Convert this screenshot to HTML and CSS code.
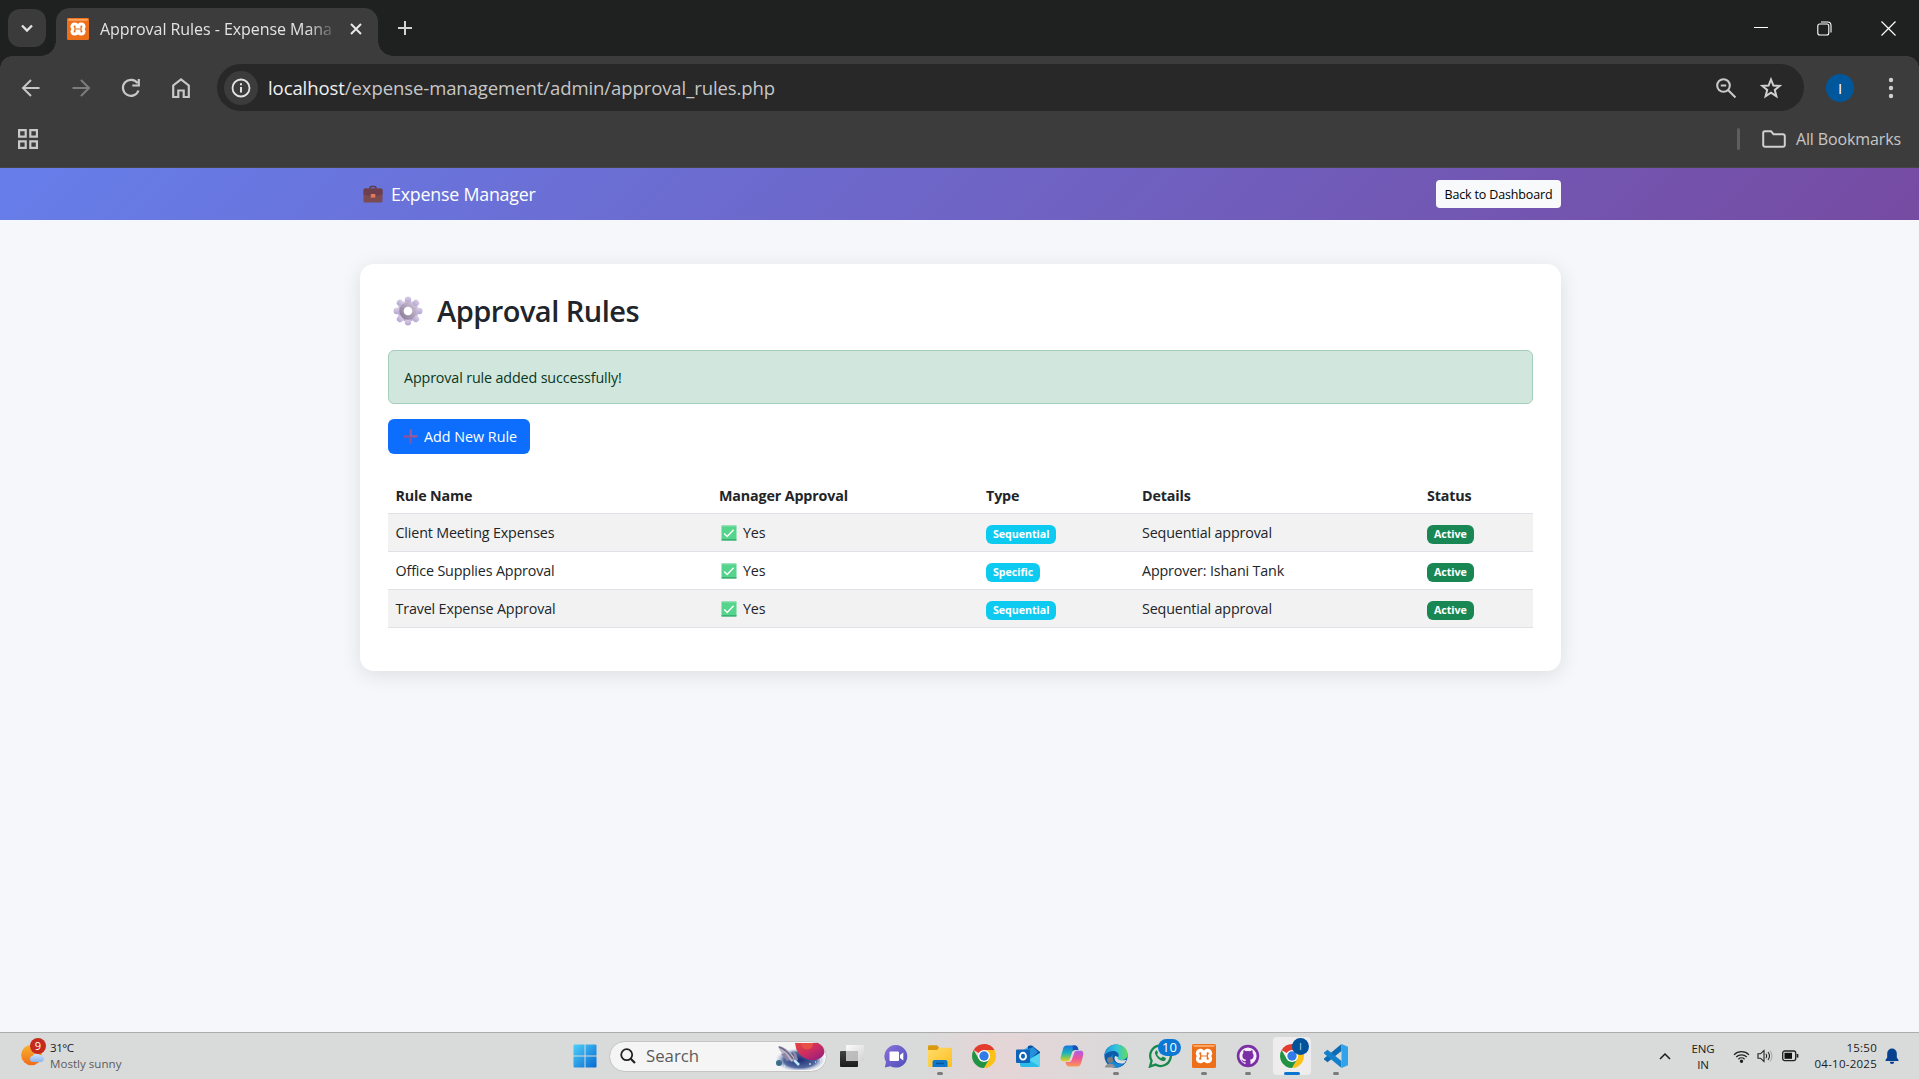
FILE: index.html
```html
<!DOCTYPE html>
<html lang="en">
<head>
<meta charset="utf-8">
<title>Approval Rules - Expense Manager</title>
<link rel="stylesheet" href="styles.css">
</head>
<body>
<svg class="defs" width="0" height="0" aria-hidden="true">
  <defs>
    <linearGradient id="gWin" x1="0" y1="0" x2="1" y2="1"><stop offset="0" stop-color="#4fd0fb"/><stop offset="1" stop-color="#0669cf"/></linearGradient>
    <linearGradient id="gGear" x1="0" y1="0" x2="0" y2="1"><stop offset="0" stop-color="#d9cfe6"/><stop offset="1" stop-color="#b5a5d2"/></linearGradient>
    <linearGradient id="gRing" x1="1" y1="0" x2="0" y2="1"><stop offset="0" stop-color="#c9bfd2"/><stop offset="1" stop-color="#8d7f9b"/></linearGradient>
    <linearGradient id="gSun" x1="0" y1="0" x2="0" y2="1"><stop offset="0" stop-color="#f5b52f"/><stop offset="1" stop-color="#f36b17"/></linearGradient>
    <linearGradient id="gCloud" x1="0" y1="0" x2="0" y2="1"><stop offset="0" stop-color="#d3e6fb"/><stop offset="1" stop-color="#8bb5f0"/></linearGradient>
    <linearGradient id="gTv" x1="0" y1="0" x2="1" y2="1"><stop offset="0" stop-color="#fff"/><stop offset="1" stop-color="#d2d2d2"/></linearGradient>
    <linearGradient id="gTvDark" x1="0" y1="0" x2="0" y2="1"><stop offset="0" stop-color="#444"/><stop offset="1" stop-color="#1b1b1b"/></linearGradient>
    <linearGradient id="gChat" x1="0" y1="0" x2="1" y2="1"><stop offset="0" stop-color="#8d75d6"/><stop offset=".35" stop-color="#7564cf"/><stop offset="1" stop-color="#4d50bb"/></linearGradient>
    <linearGradient id="gFolder" x1="0" y1="0" x2="1" y2="1"><stop offset="0" stop-color="#ffdc69"/><stop offset="1" stop-color="#fdbf22"/></linearGradient>
    <linearGradient id="gCopA" x1="0" y1="0" x2="0" y2="1"><stop offset="0" stop-color="#1276e0"/><stop offset=".5" stop-color="#25b5b9"/><stop offset=".75" stop-color="#7cc857"/><stop offset="1" stop-color="#f5cb22"/></linearGradient>
    <linearGradient id="gCopB" x1="0" y1="0" x2="0" y2="1"><stop offset="0" stop-color="#a95ee8"/><stop offset=".5" stop-color="#ee5697"/><stop offset="1" stop-color="#fb9a55"/></linearGradient>
    <linearGradient id="gEdge" x1="0" y1="0" x2="1" y2="0"><stop offset="0" stop-color="#2794dc"/><stop offset=".5" stop-color="#2fc3df"/><stop offset="1" stop-color="#63dc60"/></linearGradient>
    <linearGradient id="gPlanet" x1="0" y1="0" x2="1" y2="1"><stop offset="0" stop-color="#e4463f"/><stop offset=".5" stop-color="#cb2d63"/><stop offset="1" stop-color="#8d1a80"/></linearGradient>
    <radialGradient id="gSpace"><stop offset="0" stop-color="#1d2e75"/><stop offset=".65" stop-color="#52699f"/><stop offset="1" stop-color="#c3d4ea" stop-opacity="0"/></radialGradient>
    <symbol id="xampp" viewBox="0 0 24 24">
      <rect width="24" height="24" rx="1.5" fill="#ee6f1a"/><rect x="1.5" y="1" width="21" height="2" fill="#f9a665"/>
      <path d="M8 6.500h.5a2.500 2.500 0 0 1 2.500 2.500v.7h2V9a2.500 2.500 0 0 1 2.500-2.500h.5a2.600 2.600 0 0 1 2 4.200c-.6.800-.6 1.800 0 2.600a2.600 2.600 0 0 1-2 4.200h-.5a2.500 2.500 0 0 1-2.500-2.500v-.7h-2v.7a2.500 2.500 0 0 1-2.500 2.500H8a2.600 2.600 0 0 1-2-4.200c.6-.8.6-1.800 0-2.600A2.600 2.600 0 0 1 8 6.500z" fill="none" stroke="#fff" stroke-width="3.400"/>
    </symbol>
    <symbol id="chrome" viewBox="0 0 24 24">
      <path d="M12 12 1.61 6A12 12 0 0 1 22.39 6z" fill="#e33b2e"/>
      <path d="M12 0a12 12 0 0 1 10.39 6H12z" fill="#e33b2e"/>
      <path d="M22.39 6A12 12 0 0 1 12 24l5.2-9L17.2 9 12 6z" fill="#fbc116"/>
      <path d="M1.61 6A12 12 0 0 0 12 24l5.2-9-5.2 3-5.2-3z" fill="#229342"/>
      <circle cx="12" cy="12" r="6" fill="#fff"/><circle cx="12" cy="12" r="4.7" fill="#2f7ce8"/>
    </symbol>
    <symbol id="check" viewBox="0 0 16 16">
      <rect x=".5" y=".5" width="15" height="15" rx="1" fill="#55d48b"/><path d="M.5 14.2h15v1.3H.5z" fill="#38a670"/><path d="M.5 1.5v-1h15v1z" fill="#8cdcae"/>
      <path d="M3.2 8.4l3 3.1L12.6 4.8" fill="none" stroke="#fff" stroke-width="1.4"/>
    </symbol>
  </defs>
</svg>

<div class="screen">
  <header class="browser">
    <div class="tabstrip">
      <div class="tab-menu"><svg width="14" height="14" viewBox="0 0 14 14"><path d="M2 4.5l5 5 5-5" fill="none" stroke="#e3e3e3" stroke-width="2.3"/></svg></div>
      <div class="tab">
        <svg class="favicon" width="22" height="22"><use href="#xampp"/></svg>
        <span class="tab-title">Approval Rules - Expense Mana</span>
        <svg class="tab-close" width="12" height="12" viewBox="0 0 12 12"><path d="M1 1l10 10M11 1L1 11" stroke="#e8e8e8" stroke-width="2"/></svg>
      </div>
      <svg class="newtab" width="16" height="16" viewBox="0 0 16 16"><path d="M8 1v14M1 8h14" stroke="#d4d4d4" stroke-width="2"/></svg>
      <div class="window-buttons">
        <svg width="14" height="14" viewBox="0 0 14 14"><path d="M0 6.5h14" stroke="#fff"/></svg>
        <svg width="15" height="15" viewBox="0 0 15 15" fill="none" stroke="#fff" stroke-width="1.1"><rect x=".8" y="3" width="11" height="11" rx="2"/><path d="M4 1h6.5a3.5 3.5 0 0 1 3.5 3.5V11.500"/></svg>
        <svg width="15" height="15" viewBox="0 0 15 15"><path d="M.5.5l14 14M14.500.5l-14 14" stroke="#fff" stroke-width="1.2"/></svg>
      </div>
    </div>
    <div class="toolbar">
      <nav class="nav-icons">
        <svg width="20" height="20" viewBox="0 0 20 20" fill="none" stroke="#c8c8c8" stroke-width="2"><path d="M18.500 10H3M10 2l-8 8 8 8"/></svg>
        <svg width="20" height="20" viewBox="0 0 20 20" fill="none" stroke="#7d7d7d" stroke-width="2"><path d="M1.500 10H17M10 2l8 8-8 8"/></svg>
        <svg width="20" height="20" viewBox="0 0 20 20" fill="none" stroke="#c8c8c8" stroke-width="2.200"><path d="M17.500 12.500A8 8 0 1 1 16.500 5.200M17.800 1v6.500h-6.500"/></svg>
        <svg width="20" height="22" viewBox="0 0 20 22" fill="none" stroke="#c8c8c8" stroke-width="2.200"><path d="M2.200 20V8.500L10 2.500l7.800 6V20H12.700v-6.500H7.300V20z"/></svg>
      </nav>
      <div class="omnibox">
        <span class="site-info"><svg width="20" height="20" viewBox="0 0 20 20"><circle cx="10" cy="10" r="8.500" fill="none" stroke="#e3e3e3" stroke-width="1.800"/><path d="M10 9v5.500M10 5.300v2" stroke="#e3e3e3" stroke-width="2"/></svg></span>
        <span class="url"><b>localhost</b>/expense-management/admin/approval_rules.php</span>
        <svg class="omni-zoom" width="22" height="22" viewBox="0 0 22 22" fill="none" stroke="#c8c8c8" stroke-width="2.100"><circle cx="8.500" cy="8.500" r="6.300"/><path d="M13 13l7.500 7.500M5.800 8.500h5.400"/></svg>
        <svg class="omni-star" width="22" height="22" viewBox="0 0 22 22"><path d="M11 2.500l2.400 6 6.300.4-4.900 4 1.600 6.300L11 15.700l-5.400 3.500 1.600-6.300-4.900-4 6.300-.4z" fill="none" stroke="#d0d0d0" stroke-width="2"/></svg>
      </div>
      <span class="avatar">I</span>
      <svg class="menu-dots" width="6" height="22" viewBox="0 0 6 22" fill="#d0d0d0"><circle cx="3" cy="3" r="2.200"/><circle cx="3" cy="11" r="2.200"/><circle cx="3" cy="19" r="2.200"/></svg>
    </div>
    <div class="bookmarks">
      <svg width="20" height="20" viewBox="0 0 20 20" fill="none" stroke="#c8c8c8" stroke-width="2.200"><path d="M1.100 1.100h6.600v6.600H1.100zM12.300 1.100h6.600v6.600h-6.600zM1.100 12.300h6.600v6.600H1.100zM12.300 12.300h6.600v6.600h-6.600z"/></svg>
      <span class="bm-sep"></span>
      <svg width="24" height="18" viewBox="0 0 24 18"><path d="M3 1.200h6l2.500 3H21a2 2 0 0 1 1.800 2V15a1.800 1.800 0 0 1-1.800 1.800H3A1.800 1.800 0 0 1 1.200 15V3A1.800 1.800 0 0 1 3 1.200z" fill="none" stroke="#d0d0d0" stroke-width="2"/></svg>
      <span class="bm-label">All Bookmarks</span>
    </div>
  </header>

  <div class="page">
    <nav class="navbar">
      <div class="container">
        <div class="brand">
          <svg width="20" height="18" viewBox="0 0 20 18"><path d="M7 4.500V3a1.500 1.500 0 0 1 1.500-1.500h3A1.500 1.500 0 0 1 13 3v1.500" fill="none" stroke="#5b3a4c" stroke-width="1.500"/><rect x=".5" y="3.500" width="19" height="14" rx="1.500" fill="#7b4b53"/><path d="M.5 5v4.500L7 11h6l6.500-1.500V5A1.500 1.500 0 0 0 18 3.500H2A1.500 1.500 0 0 0 .5 5z" fill="#6d3f4e"/><rect x="7.800" y="9" width="4.500" height="3.600" fill="#e17a55"/></svg>
          <span>Expense Manager</span>
        </div>
        <a class="back-btn">Back to Dashboard</a>
      </div>
    </nav>
    <main class="card">
      <h2 class="title">
        <svg width="30" height="30" viewBox="-15 -15 30 30"><g fill="url(#gGear)"><circle r="10.500"/><g id="teeth"><circle cy="-11.300" r="3.200"/><circle cy="11.300" r="3.200"/><circle cx="-11.300" r="3.200"/><circle cx="11.300" r="3.200"/></g><use href="#teeth" transform="rotate(45)"/></g><circle r="6.500" fill="none" stroke="url(#gRing)" stroke-width="4.500"/><circle r="4.300" fill="#fff"/></svg>
        <span>Approval Rules</span>
      </h2>
      <div class="alert">Approval rule added successfully!</div>
      <a class="add-btn"><svg width="15" height="15" viewBox="0 0 15 15"><path d="M7.500.5v14M.5 7.500h14" stroke="#85539f" stroke-width="2.600"/><path d="M8 .5v6.500h6.500" fill="none" stroke="#a763a3" stroke-width="1"/></svg><span>Add New Rule</span></a>
      <table class="rules">
        <colgroup><col class="c-name"><col class="c-manager"><col class="c-type"><col class="c-details"><col class="c-status"></colgroup>
        <thead><tr><th>Rule Name</th><th>Manager Approval</th><th>Type</th><th>Details</th><th>Status</th></tr></thead>
        <tbody>
          <tr><td>Client Meeting Expenses</td><td><span class="yes"><svg width="16" height="16"><use href="#check"/></svg>Yes</span></td><td><span class="badge info">Sequential</span></td><td>Sequential approval</td><td><span class="badge ok">Active</span></td></tr>
          <tr><td>Office Supplies Approval</td><td><span class="yes"><svg width="16" height="16"><use href="#check"/></svg>Yes</span></td><td><span class="badge info">Specific</span></td><td>Approver: Ishani Tank</td><td><span class="badge ok">Active</span></td></tr>
          <tr><td>Travel Expense Approval</td><td><span class="yes"><svg width="16" height="16"><use href="#check"/></svg>Yes</span></td><td><span class="badge info">Sequential</span></td><td>Sequential approval</td><td><span class="badge ok">Active</span></td></tr>
        </tbody>
      </table>
    </main>
  </div>

  <footer class="taskbar">
    <div class="weather">
      <div class="weather-icon">
        <svg width="24" height="22" viewBox="0 0 24 22"><circle cx="10.500" cy="11" r="10.300" fill="url(#gSun)"/><path d="M11.500 18a3.200 3.200 0 0 1 .2-6.300 4 4 0 0 1 7-.6 3.500 3.500 0 0 1 1.300 6.900z" fill="url(#gCloud)"/></svg>
        <span class="weather-badge">9</span>
      </div>
      <div class="weather-text"><span class="temp">31°C</span><span class="cond">Mostly sunny</span></div>
    </div>
    <div class="apps">
      <span class="app"><svg width="24" height="24" viewBox="0 0 24 24" fill="url(#gWin)"><path d="M1.500.5H11.500v11H.5V1.500a1 1 0 0 1 1-1zM12.500.5h10a1 1 0 0 1 1 1v10h-11zM.5 12.500h11v11h-10a1 1 0 0 1-1-1zM12.500 12.500h11v10a1 1 0 0 1-1 1h-10z"/></svg></span>
      <div class="search">
        <svg width="16" height="16" viewBox="0 0 16 16" fill="none" stroke="#222" stroke-width="1.800"><circle cx="6.700" cy="6.700" r="5.500"/><path d="M10.700 10.700l4.300 4.300" stroke-width="2.200"/></svg>
        <span>Search</span>
        <svg class="space" width="50" height="28" viewBox="0 0 50 28"><ellipse cx="25" cy="18" rx="25" ry="12" fill="url(#gSpace)"/><path d="M20 1h23q6 3 6.500 9-1 6-9 8-11 1-17-7-3-4-3.500-10z" fill="url(#gPlanet)"/><path d="M26 1h12q0 6-6 6.500-5 0-6-6.500z" fill="#e94f47"/><path d="M3 4q8 0 17 12l-3 4Q5 12 3 4z" fill="#b9b3c7"/><path d="M4 5q7 2 14 12" fill="none" stroke="#6b6580" stroke-width="1.500"/><path d="M6 12l4-1 5 7-3 1zM17 9l4 2 2 7-2 1z" fill="#8c86a3"/><path d="M19 18l5 5" stroke="#bdeaff" stroke-width="2.500"/><circle cx="4" cy="21" r="3" fill="#3b6d8b"/><path d="M34 22h2M40 20h1M9 24h1M45 18h1" stroke="#fff"/></svg>
      </div>
      <span class="app"><svg width="24" height="24" viewBox="0 0 24 24"><rect y="7" width="18" height="16" rx="1" fill="url(#gTvDark)"/><rect x="6" y="1" width="18" height="16" rx="1" fill="url(#gTv)" opacity=".92"/><path d="M6 7h12v10H7a1 1 0 0 1-1-1z" fill="#b5b5b5" opacity=".8"/></svg></span>
      <span class="app"><svg width="24" height="24" viewBox="0 0 24 24"><path d="M12 1a11.300 11.300 0 1 1-5.500 21.200L.8 23.500 2 18A11.300 11.300 0 0 1 12 1z" fill="url(#gChat)"/><rect x="5.500" y="7.500" width="9.500" height="9.500" rx="1" fill="#fff"/><path d="M16 11l3.300-2.500v8L16 14z" fill="#fff"/></svg></span>
      <span class="app open"><svg width="24" height="24" viewBox="0 0 24 24"><path d="M0 2.500a1.200 1.200 0 0 1 1.200-1.200H9l2 2.200V7H0z" fill="#d99a10"/><path d="M0 6h9l2-2.200h12a1 1 0 0 1 1 1V22a1 1 0 0 1-1 1H1a1 1 0 0 1-1-1z" fill="url(#gFolder)"/><path d="M4.500 23v-5a2 2 0 0 1 2-2h11a2 2 0 0 1 2 2v5z" fill="#1076c9"/><path d="M8 19.500h8" stroke="#075497" stroke-width="1.300"/></svg></span>
      <span class="app"><svg width="24" height="24"><use href="#chrome"/></svg></span>
      <span class="app"><svg width="24" height="24" viewBox="0 0 24 24"><path d="M4 9l10-8 10 7v5H4z" fill="#35b7ee"/><path d="M12 2l4-.5 8 6.500v4L12 17z" fill="#0d4f9e"/><path d="M6 8l11-5 5 5-9 8H6z" fill="#2590db"/><path d="M4 15h9l11-6v12a2 2 0 0 1-2 2H6a2 2 0 0 1-2-2z" fill="#28bde9"/><path d="M13 16l11 6.500V9z" fill="#55d4f2"/><rect y="5.500" width="14" height="13.500" rx="1" fill="#0f64b9"/><ellipse cx="7" cy="12.200" rx="3" ry="3.400" fill="none" stroke="#fff" stroke-width="1.900"/></svg></span>
      <span class="app"><svg width="24" height="24" viewBox="0 0 24 24"><path d="M6.500 1.500h8.800c2 0 2.700 2.500 3.200 4.500h-3.300c-2 0-2.700 1-3.300 3L9.800 15c-.6 1.700-1.500 2.300-3 2.300H3.500C.5 17.300.2 14.600 1 12l2-7.300C3.700 2.600 4.700 1.500 6.500 1.500z" fill="url(#gCopA)"/><path d="M17.500 22.500H8.700c-2 0-2.700-2.500-3.200-4.500h3.300c2 0 2.700-1 3.300-3l2.100-6c.6-1.700 1.500-2.300 3-2.300h3.300c3 0 3.300 2.700 2.500 5.300l-2 7.300c-.7 2.100-1.700 3.200-3.500 3.200z" fill="url(#gCopB)"/><path d="M12.500 1.500h2.800c2 0 2.700 2.500 3.200 4.500h-3.300c-1 0-1.700.3-2.300 1z" fill="#1750b8"/></svg></span>
      <span class="app open"><svg width="24" height="24" viewBox="0 0 24 24"><circle cx="12" cy="12" r="11.600" fill="#0b5cab"/><path d="M.4 12A11.700 11.700 0 0 1 12 .4c7.500 0 11.700 5 11.700 9.600 0 4-3 6.200-6 6.200-3.500 0-4.500-1.500-3.500-3C16 9.500 12.500 7 9.500 7 5 7 1 9.500.4 12z" fill="url(#gEdge)"/><path d="M9 10.500C7 18 13 21.500 20 19c-3 5-10 6-14 3-3-3-1-9 3-11.500z" fill="#1687d5"/><path d="M14 13c-1 2 1 4.500 8.500 2.800L20.500 19C14 21 9 17 11 12z" fill="#dedfe1"/><circle cx="6" cy="16" r="3" fill="#7c7c7c"/><path d="M1 23.500c0-5 10-5 10 0z" fill="#929292"/></svg></span>
      <span class="app"><svg width="24" height="24" viewBox="0 0 24 24"><path d="M2 22.500l1.600-5.700A10.300 10.300 0 1 1 7.400 20.600z" fill="none" stroke="#168a4c" stroke-width="2.300"/><path d="M8.300 6.500c-1.500.8-1.700 2.800-.7 4.600 1.300 2.700 3.200 4.600 6 5.700 2 .8 3.500 0 4.100-1.300l.1-1.500-3-1.400-1.500 1.500c-2-.7-3.300-2-4.200-3.800l1-1.400-1.200-2.600z" fill="#168a4c"/></svg><span class="count">10</span></span>
      <span class="app open"><svg width="24" height="24"><use href="#xampp"/></svg></span>
      <span class="app open"><svg width="24" height="24" viewBox="0 0 24 24"><circle cx="12" cy="12" r="11.200" fill="#7b2fa5"/><circle cx="12" cy="12" r="8.600" fill="#f4edf7"/><path d="M9.500 21v-2.700c-2.300.5-2.800-.6-3.400-1.700l-.8-.7c1.700-.3 2 1.500 3.300 1.300l1-.3.4-1.200C7.500 15.300 6.400 14 6.400 11.500c0-1 .4-1.900 1-2.600-.2-.7-.1-1.800.2-2.600 1 0 1.700.5 2.500 1 1.300-.3 2.500-.3 3.800 0 .8-.5 1.500-1 2.500-1 .3.800.4 1.900.2 2.600.6.700 1 1.600 1 2.600 0 2.500-1.100 3.800-3.600 4.200.4.500.5 1.200.5 2V21z" fill="#7b2fa5"/></svg></span>
      <span class="app active"><svg width="24" height="24"><use href="#chrome"/></svg><span class="profile">I</span></span>
      <span class="app open"><svg width="24" height="24" viewBox="0 0 24 24"><path d="M17.500 0v7L3.500 18.300 0 15.500v-1z" fill="#0e6bb3"/><path d="M17.500 24v-7L3.500 5.700 0 8.500v1z" fill="#1480cc"/><path d="M17.500 0L24 2.800v18.400L17.500 24z" fill="#30a3ea"/></svg></span>
    </div>
    <div class="tray">
      <svg class="chev" width="12" height="8" viewBox="0 0 12 8"><path d="M1 7l5-5 5 5" fill="none" stroke="#1b1b1b" stroke-width="1.500"/></svg>
      <div class="lang"><span>ENG</span><span>IN</span></div>
      <svg class="wifi" width="17" height="13" viewBox="0 0 17 13" fill="none" stroke="#222" stroke-width="1.200"><path d="M1 4.800a10.600 10.600 0 0 1 15 0M3.200 7a7.500 7.500 0 0 1 10.600 0M5.400 9.200a4.400 4.400 0 0 1 6.200 0"/><circle cx="8.500" cy="11.300" r="1.100" fill="#222"/></svg>
      <svg class="vol" width="17" height="14" viewBox="0 0 17 14" fill="none" stroke="#222" stroke-width="1.100"><path d="M1 4.800h2.500L7 1.500v11L3.500 9.200H1z"/><path d="M9 4.800q1.500 2.200 0 4.400M11 3q3 4 0 8"/><path d="M13 1.500q4 5.500 0 11" stroke="#aaa"/></svg>
      <svg class="battery" width="17" height="12" viewBox="0 0 17 12"><rect x=".7" y="1" width="13" height="9.600" rx="2" fill="none" stroke="#222" stroke-width="1.300"/><rect x="2.500" y="2.800" width="7.500" height="6" fill="#111"/><path d="M15.500 4v3.600" stroke="#222" stroke-width="1.700"/></svg>
      <div class="clock"><span class="time">15:50</span><span>04-10-2025</span></div>
      <svg class="bell" width="14" height="16" viewBox="0 0 14 16" fill="#07418f"><path d="M7 .5a4.800 4.800 0 0 1 4.800 4.800v4.200L13.500 12v1H.5v-1l1.700-2.500V5.300A4.800 4.800 0 0 1 7 .5zM4.800 13.800h4.400a2.200 2.200 0 0 1-4.400 0z"/></svg>
    </div>
  </footer>
</div>
</body>
</html>
```
FILE: styles.css
```css
* { box-sizing: border-box; }
body { margin: 0; font-family: "Open Sans", "Noto Sans", sans-serif; color: #212529; }
svg { display: block; flex: none; }
.defs { position: absolute; }
.screen { display: flex; flex-direction: column; height: 1079px; width: 100%; overflow: hidden; }

/* browser frame */
.browser { height: 168px; background: #3c3c3c; border-bottom: 1px solid #474646; flex: none; }
.tabstrip { height: 56px; background: #1f2120; display: flex; align-items: center; padding-left: 8px; position: relative; }
.tabstrip::before, .tabstrip::after { content: ""; position: absolute; top: 56px; width: 12px; height: 12px; }
.tabstrip::before { left: 0; background: radial-gradient(circle at 100% 100%, #3c3c3c 11.500px, #1f2120 12px); }
.tabstrip::after { right: 0; background: radial-gradient(circle at 0 100%, #3c3c3c 11.500px, #1f2120 12px); }
.tab-menu { width: 38px; height: 38px; border-radius: 12px; background: #3a3b3a; display: grid; place-items: center; }
.tab { position: relative; margin: 8px 0 0 10px; width: 322px; height: 48px; background: #3c3c3c; border-radius: 14px 14px 0 0; display: flex; align-items: center; padding: 0 0 7px 11px; }
.tab::before, .tab::after { content: ""; position: absolute; bottom: 0; width: 15px; height: 15px; }
.tab::before { left: -15px; background: radial-gradient(circle at 0 0, transparent 14.500px, #3c3c3c 15px); }
.tab::after { right: -15px; background: radial-gradient(circle at 100% 0, transparent 14.500px, #3c3c3c 15px); }
.tab-title { margin-left: 11px; width: 233px; white-space: nowrap; font-size: 16px; letter-spacing: -.05px; line-height: 24px; color: #e3e3e3; -webkit-mask-image: linear-gradient(90deg, #000 208px, transparent 238px); mask-image: linear-gradient(90deg, #000 208px, transparent 238px); }
.tab-close { margin-left: 17px; }
.newtab { margin-left: 19px; }
.window-buttons { margin-left: auto; display: flex; align-items: center; gap: 49px; padding-right: 23px; }
.toolbar { height: 64px; display: flex; align-items: center; padding: 0 0 1px 6px; }
.nav-icons { display: grid; grid-template-columns: repeat(4, 50px); place-items: center; }
.omnibox { margin-left: 11px; width: 1587px; height: 47px; border-radius: 24px; background: #282828; display: flex; align-items: center; padding: 0 22px 0 7px; }
.site-info { width: 34px; height: 34px; border-radius: 50%; background: #3c3c3c; display: grid; place-items: center; }
.url { margin-left: 10px; font-size: 18.500px; letter-spacing: -.08px; color: #c7c7c7; }
.url b { font-weight: 400; color: #f0f0f0; }
.omni-zoom { margin-left: auto; }
.omni-star { margin-left: 23px; }
.avatar { margin-left: 22px; width: 28px; height: 28px; border-radius: 50%; background: #01579b; color: #fff; font-size: 15px; line-height: 28px; text-align: center; }
.menu-dots { margin-left: 34px; }
.bookmarks { height: 38px; display: flex; align-items: center; padding: 0 18px; }
.bm-sep { width: 3px; height: 22px; border-radius: 2px; background: #5e5e5e; margin: 0 22px 0 auto; }
.bm-label { margin-left: 10px; font-size: 16px; letter-spacing: -.12px; color: #c7c7c7; }

/* page */
.page { flex: 1; background: #f5f7fb; }
.navbar { height: 52px; background: linear-gradient(135deg, #667eea, #764ba2); }
.container { width: 1201px; height: 100%; margin: 0 0 0 360px; padding: 0 0 0 3px; display: flex; align-items: center; justify-content: space-between; }
.brand { display: flex; align-items: center; gap: 8px; color: #fff; font-size: 17.800px; letter-spacing: -.2px; }
.back-btn { width: 125px; height: 28px; border-radius: 4px; background: #f8f9fa; color: #000; font-size: 12.500px; letter-spacing: -.15px; line-height: 29px; text-align: center; }
.card { width: 1201px; height: 407px; margin: 44px 0 0 360px; padding: 28px; background: #fff; border-radius: 14px; box-shadow: 0 4px 20px rgba(0, 0, 0, .1); }
.title { margin: 0 0 20px; height: 38px; padding-left: 5px; display: flex; align-items: center; gap: 14px; font-size: 29px; font-weight: 600; letter-spacing: -.52px; }
.title span { margin-top: -2px; }
.alert { height: 54px; padding: 0 15px; border: 1px solid #a3cfbb; border-radius: 6px; background: #d1e7dd; color: #0a3622; font-size: 14.300px; letter-spacing: -.13px; line-height: 53px; }
.add-btn { margin-top: 15px; width: 142px; height: 35px; border-radius: 6px; background: #0d6efd; color: #fff; display: flex; align-items: center; padding-left: 15px; gap: 6px; font-size: 14.300px; }
.rules { margin-top: 23px; width: 1145px; table-layout: fixed; border-collapse: collapse; font-size: 14.300px; letter-spacing: -.15px; }
.c-name { width: 323.500px; }
.c-manager { width: 267px; }
.c-type { width: 156px; }
.c-details { width: 285px; }
.rules th, .rules td { height: 38px; padding: 2px 7.500px 0; border-bottom: 1px solid #dee2e6; text-align: left; vertical-align: middle; line-height: 22px; }
.rules th { height: 36px; padding-top: 3px; font-weight: 700; }
.rules tbody tr:nth-child(odd) { background: #f2f2f2; }
.yes { display: flex; align-items: center; gap: 6px; padding-left: 2px; }
.badge { display: inline-block; height: 19px; padding: 0 7px; border-radius: 6px; color: #fff; font-size: 10.700px; font-weight: 700; letter-spacing: -.05px; line-height: 19px; vertical-align: middle; }
.info { background: #0dcaf0; }
.ok { background: #198754; }

/* taskbar */
.taskbar { height: 47px; flex: none; border-top: 1px solid #adadb0; background: linear-gradient(90deg, #d9dada 0, #d9dada 48%, #e4d5d7 52%, #e4d5d7 53%, #d9dada 59%, #d9dada 100%); display: flex; color: #1b1b1b; }
.weather { width: 563px; display: flex; padding: 5px 0 0 21px; font-size: 11.600px; }
.weather-icon { position: relative; width: 24px; padding-top: 6px; }
.weather-badge { position: absolute; left: 9px; top: 0; width: 16px; height: 16px; border-radius: 50%; background: #c42b1c; color: #fff; font-size: 11px; line-height: 16px; text-align: center; }
.weather-text { margin-left: 5px; display: flex; flex-direction: column; line-height: 16px; padding-top: 2px; }
.temp { letter-spacing: -.5px; }
.cond { color: #5c5c5c; }
.apps { display: flex; align-items: center; }
.app { position: relative; width: 44px; height: 46px; display: grid; place-items: center; }
.open::after, .active::after { content: ""; position: absolute; left: 19px; top: 39px; width: 6px; height: 3px; border-radius: 2px; background: #7b7b7b; }
.active::before { content: ""; position: absolute; inset: 4px 3px; border-radius: 4px; background: #eeecec; }
.active svg { position: relative; }
.active::after { left: 14px; width: 16px; background: #0a74d1; }
.count { position: absolute; left: 20px; top: 6px; width: 23px; height: 17px; border-radius: 9px; background: #0a78d4; color: #fff; font-size: 13px; line-height: 17px; text-align: center; }
.profile { position: absolute; left: 22px; top: 5px; width: 17px; height: 17px; border-radius: 50%; background: #01529a; color: #cfe0ef; font-size: 9px; line-height: 17px; text-align: center; }
.search { width: 218px; height: 31px; margin: 0 3px 0 2px; border: 1px solid #c5c5c5; border-radius: 16px; background: #f5f5f5; display: flex; align-items: center; padding-left: 10px; font-size: 16.800px; color: #5b5b5b; }
.search span { margin-left: 10px; line-height: 24px; }
.space { margin-left: auto; margin-right: 1px; }
.tray { flex: 1; display: flex; align-items: center; justify-content: flex-end; padding-right: 20px; font-size: 11.500px; line-height: 16px; }
.chev { margin-right: 20px; }
.lang { width: 24px; display: flex; flex-direction: column; text-align: center; letter-spacing: -.1px; padding-top: 1px; }
.wifi { margin-left: 18px; }
.vol { margin-left: 7px; }
.battery { margin-left: 8px; }
.clock { width: 63px; margin-left: 15px; display: flex; flex-direction: column; text-align: right; white-space: nowrap; letter-spacing: .25px; }
.bell { margin-left: 8px; }
```
